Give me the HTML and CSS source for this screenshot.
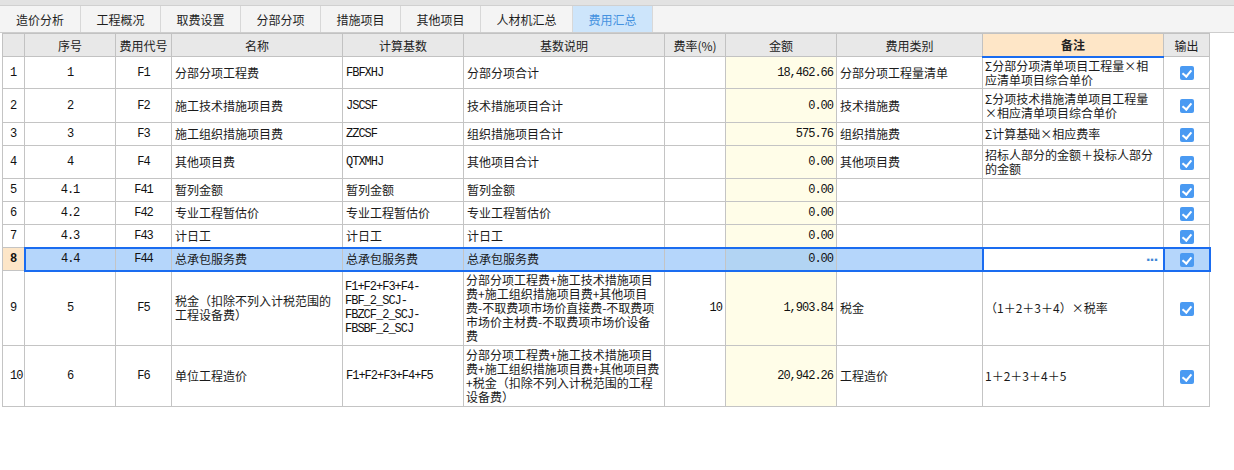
FILE: index.html
```html
<!DOCTYPE html>
<html lang="zh-CN">
<head>
<meta charset="utf-8">
<title>费用汇总</title>
<link rel="stylesheet" href="styles.css">
</head>
<body>
<div class="topband"></div>
<div class="tabs">
  <div class="tab w81">造价分析</div>
  <div class="tab">工程概况</div>
  <div class="tab">取费设置</div>
  <div class="tab">分部分项</div>
  <div class="tab">措施项目</div>
  <div class="tab">其他项目</div>
  <div class="tab w92">人材机汇总</div>
  <div class="tab active">费用汇总</div>
</div>
<div class="sheet">
<table class="grid">
  <colgroup>
    <col class="c-rn"><col class="c-xh"><col class="c-dm"><col class="c-mc"><col class="c-js"><col class="c-sm"><col class="c-fl"><col class="c-je"><col class="c-lb"><col class="c-bz"><col class="c-sc">
  </colgroup>
  <thead>
    <tr class="h23">
      <th></th><th>序号</th><th>费用代号</th><th>名称</th><th>计算基数</th><th>基数说明</th><th>费率(%)</th><th>金额</th><th>费用类别</th><th class="hl">备注</th><th>输出</th>
    </tr>
  </thead>
  <tbody>
    <tr class="h32">
      <td class="rn">1</td><td class="mono c">1</td><td class="mono c">F1</td><td>分部分项工程费</td><td class="mono">FBFXHJ</td><td>分部分项合计</td><td class="mono r"></td><td class="amt mono">18,462.66</td><td>分部分项工程量清单</td><td class="note">Σ分部分项清单项目工程量×相<br>应清单项目综合单价</td><td class="c"><span class="chk"></span></td>
    </tr>
    <tr class="h34">
      <td class="rn">2</td><td class="mono c">2</td><td class="mono c">F2</td><td>施工技术措施项目费</td><td class="mono">JSCSF</td><td>技术措施项目合计</td><td class="mono r"></td><td class="amt mono">0.00</td><td>技术措施费</td><td class="note">Σ分项技术措施清单项目工程量<br>×相应清单项目综合单价</td><td class="c"><span class="chk"></span></td>
    </tr>
    <tr class="h23">
      <td class="rn">3</td><td class="mono c">3</td><td class="mono c">F3</td><td>施工组织措施项目费</td><td class="mono">ZZCSF</td><td>组织措施项目合计</td><td class="mono r"></td><td class="amt mono">575.76</td><td>组织措施费</td><td class="note">Σ计算基础×相应费率</td><td class="c"><span class="chk"></span></td>
    </tr>
    <tr class="h33">
      <td class="rn">4</td><td class="mono c">4</td><td class="mono c">F4</td><td>其他项目费</td><td class="mono">QTXMHJ</td><td>其他项目合计</td><td class="mono r"></td><td class="amt mono">0.00</td><td>其他项目费</td><td class="note">招标人部分的金额＋投标人部分<br>的金额</td><td class="c"><span class="chk"></span></td>
    </tr>
    <tr class="h23">
      <td class="rn">5</td><td class="mono c">4.1</td><td class="mono c">F41</td><td>暂列金额</td><td>暂列金额</td><td>暂列金额</td><td class="mono r"></td><td class="amt mono">0.00</td><td></td><td class="note"></td><td class="c"><span class="chk"></span></td>
    </tr>
    <tr class="h23">
      <td class="rn">6</td><td class="mono c">4.2</td><td class="mono c">F42</td><td>专业工程暂估价</td><td>专业工程暂估价</td><td>专业工程暂估价</td><td class="mono r"></td><td class="amt mono">0.00</td><td></td><td class="note"></td><td class="c"><span class="chk"></span></td>
    </tr>
    <tr class="h23">
      <td class="rn">7</td><td class="mono c">4.3</td><td class="mono c">F43</td><td>计日工</td><td>计日工</td><td>计日工</td><td class="mono r"></td><td class="amt mono">0.00</td><td></td><td class="note"></td><td class="c"><span class="chk"></span></td>
    </tr>
    <tr class="h23 sel">
      <td class="rn">8</td><td class="mono c first">4.4</td><td class="mono c">F44</td><td>总承包服务费</td><td>总承包服务费</td><td>总承包服务费</td><td class="mono r"></td><td class="amt mono">0.00</td><td></td><td class="note edit"><span class="dots">···</span></td><td class="c last"><span class="chk"></span></td>
    </tr>
    <tr class="h75">
      <td class="rn">9</td><td class="mono c">5</td><td class="mono c">F5</td><td>税金（扣除不列入计税范围的<br>工程设备费）</td><td class="mono multi">F1+F2+F3+F4-<br>FBF_2_SCJ-<br>FBZCF_2_SCJ-<br>FBSBF_2_SCJ</td><td class="multi">分部分项工程费+施工技术措施项目<br>费+施工组织措施项目费+其他项目<br>费-不取费项市场价直接费-不取费项<br>市场价主材费-不取费项市场价设备<br>费</td><td class="mono r">10</td><td class="amt mono">1,903.84</td><td>税金</td><td class="note">（1＋2＋3＋4）×税率</td><td class="c"><span class="chk"></span></td>
    </tr>
    <tr class="h61">
      <td class="rn">10</td><td class="mono c">6</td><td class="mono c">F6</td><td>单位工程造价</td><td class="mono">F1+F2+F3+F4+F5</td><td class="multi">分部分项工程费+施工技术措施项目<br>费+施工组织措施项目费+其他项目费<br>+税金（扣除不列入计税范围的工程<br>设备费）</td><td class="mono r"></td><td class="amt mono">20,942.26</td><td>工程造价</td><td class="note">1＋2＋3＋4＋5</td><td class="c"><span class="chk"></span></td>
    </tr>
  </tbody>
</table>
</div>
</body>
</html>
```

FILE: styles.css
```css
html, body {
  margin: 0;
  padding: 0;
  background: #ffffff;
}
body {
  font-family: "Noto Sans CJK SC", "Noto Sans", sans-serif;
  font-size: 12px;
  color: #1a1a1a;
  width: 1234px;
  height: 470px;
  overflow: hidden;
}
.topband {
  height: 5px;
  background: #e2e2e2;
  border-bottom: 1px solid #d0d0d0;
}
.tabs {
  display: flex;
  height: 26px;
  background: #f4f4f4;
  border-bottom: 1px solid #cdcdcd;
}
.tab {
  box-sizing: border-box;
  width: 80px;
  border-right: 1px solid #d8d8d8;
  display: flex;
  align-items: center;
  justify-content: center;
  font-size: 12px;
  color: #1e1e1e;
}
.tab.w81 { width: 81px; }
.tab.w92 { width: 92px; }
.tab.active {
  background: #cde5fb;
  color: #4592e0;
}
.sheet {
  padding-left: 2px;
}
.grid {
  border-collapse: collapse;
  table-layout: fixed;
  width: 1207px;
}
.c-rn { width: 22px; }
.c-xh { width: 91px; }
.c-dm { width: 56px; }
.c-mc { width: 171px; }
.c-js { width: 121px; }
.c-sm { width: 201px; }
.c-fl { width: 61px; }
.c-je { width: 111px; }
.c-lb { width: 146px; }
.c-bz { width: 181px; }
.c-sc { width: 46px; }

.grid th {
  background: #e8e8e8;
  border: 1px solid #c2c2c2;
  font-weight: normal;
  font-size: 12px;
  color: #222;
  padding: 0;
  white-space: nowrap;
}
.grid th.hl {
  background: #fee6c7;
  font-weight: bold;
  border-bottom: 2px solid #1a6cf0;
}
.grid td {
  border: 1px solid #c4c4c4;
  padding: 0 3px;
  line-height: 14px;
  white-space: nowrap;
  overflow: hidden;
  vertical-align: middle;
}
.h23 { height: 23px; }
.h32 { height: 32px; }
.h33 { height: 33px; }
.h34 { height: 34px; }
.h61 { height: 61px; }
.h75 { height: 75px; }

.grid td.multi { padding-left: 2px; }
.grid td.rn {
  font-family: "Liberation Mono", monospace;
  font-size: 12px;
  letter-spacing: -1px;
  padding-left: 7px;
  padding-right: 0;
  color: #111;
}
.mono {
  font-family: "Liberation Mono", monospace;
  font-size: 12px;
  letter-spacing: -1px;
  color: #111;
}
.c { text-align: center; }
.r { text-align: right; }
.grid td.amt {
  background: #fffde8;
  text-align: right;
  padding-right: 3px;
}
.grid td.note { padding-left: 2px; }

.chk {
  display: inline-block;
  width: 14px;
  height: 14px;
  border-radius: 2px;
  background: #4a9af2;
  position: relative;
  vertical-align: middle;
}
.chk::after {
  content: "";
  position: absolute;
  left: 4px;
  top: 2px;
  width: 4px;
  height: 7px;
  border-right: 2px solid #fff;
  border-bottom: 2px solid #fff;
  transform: rotate(40deg);
}

.sel td {
  background: #b5d6fb;
  border-top: 2px solid #1a6cf0;
  border-bottom: 2px solid #1a6cf0;
}
.sel td.rn {
  background: #fde6c8;
  font-weight: bold;
  border-top: 1px solid #c4c4c4;
  border-bottom: 1px solid #c4c4c4;
}
.sel td.first { border-left: 2px solid #1a6cf0; }
.sel td.last { border-right: 2px solid #1a6cf0; }
.sel td.amt { background: #b2d4f3; }
.sel td.edit {
  background: #ffffff;
  border: 2px solid #1a6cf0;
  text-align: right;
  padding-right: 5px;
}
.dots {
  color: #3f87d6;
  font-family: "DejaVu Sans", sans-serif;
  font-size: 13px;
  font-weight: bold;
  letter-spacing: -1px;
}
```
